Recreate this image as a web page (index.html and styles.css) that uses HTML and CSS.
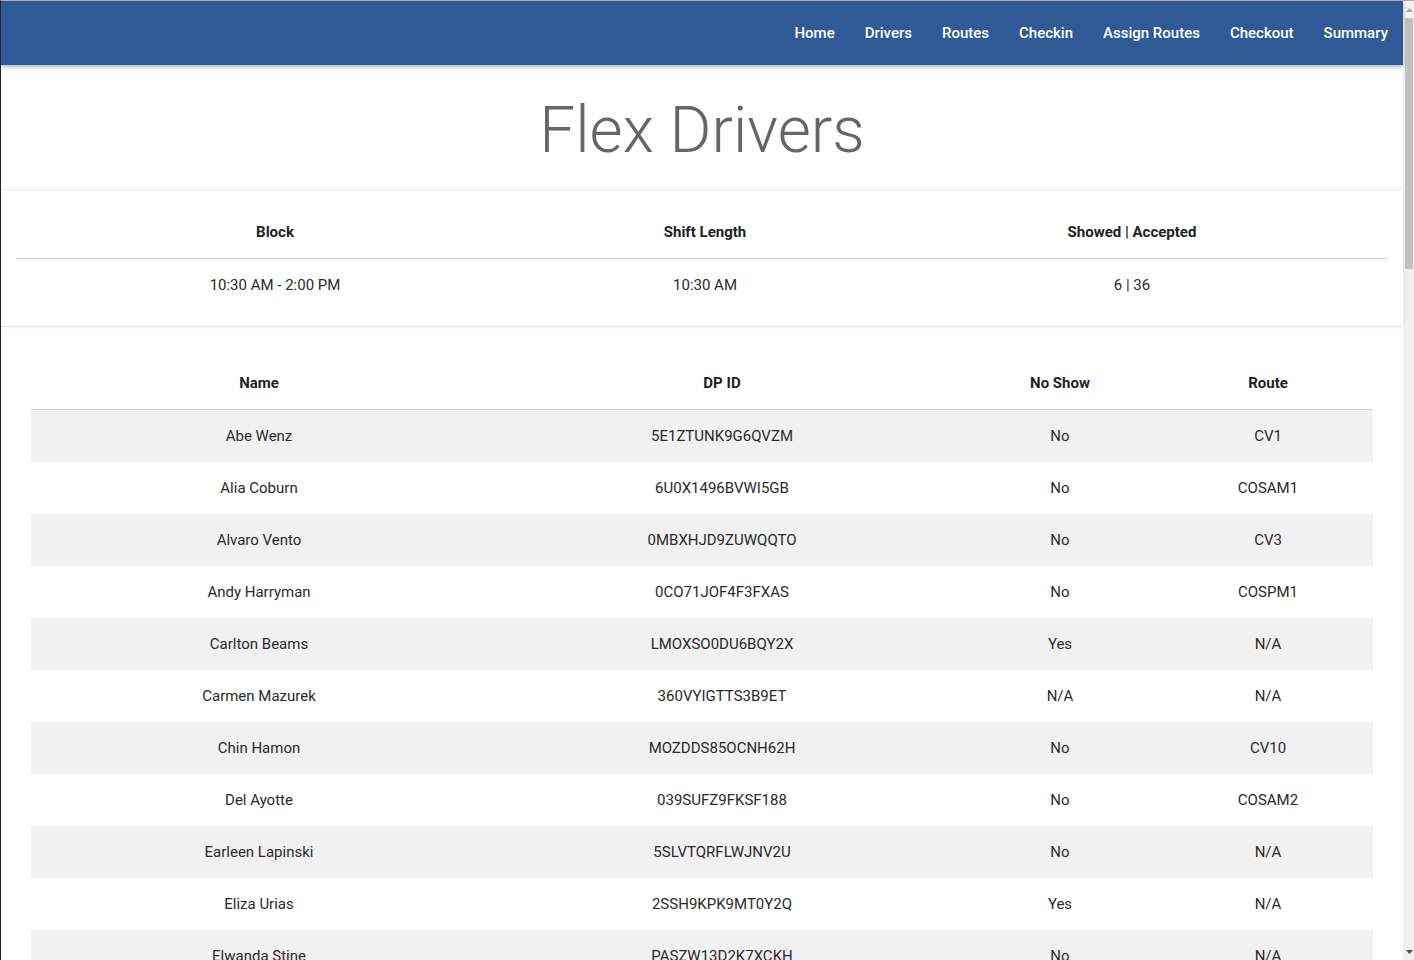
FILE: index.html
```html
<!DOCTYPE html>
<html lang="en">
<head>
<meta charset="utf-8">
<title>Flex Drivers</title>
<link rel="stylesheet" href="styles.css">
</head>
<body>
<div class="page">
<header class="navbar">
  <nav class="nav">
    <a class="nav-link" href="#">Home</a>
    <a class="nav-link" href="#">Drivers</a>
    <a class="nav-link" href="#">Routes</a>
    <a class="nav-link" href="#">Checkin</a>
    <a class="nav-link" href="#">Assign Routes</a>
    <a class="nav-link" href="#">Checkout</a>
    <a class="nav-link" href="#">Summary</a>
  </nav>
</header>

<section class="title-section">
  <h1 class="page-title">Flex Drivers</h1>
</section>

<section class="summary-card">
  <table class="summary-table">
    <colgroup><col class="c-block"><col class="c-shift"><col class="c-showed"></colgroup>
    <thead>
      <tr><th>Block</th><th>Shift Length</th><th>Showed | Accepted</th></tr>
    </thead>
    <tbody>
      <tr><td>10:30 AM - 2:00 PM</td><td>10:30 AM</td><td>6 | 36</td></tr>
    </tbody>
  </table>
</section>

<section class="drivers">
  <table class="drivers-table">
    <colgroup><col class="c-name"><col class="c-id"><col class="c-noshow"><col class="c-route"></colgroup>
    <thead>
      <tr><th>Name</th><th>DP ID</th><th>No Show</th><th>Route</th></tr>
    </thead>
    <tbody>
      <tr><td>Abe Wenz</td><td>5E1ZTUNK9G6QVZM</td><td>No</td><td>CV1</td></tr>
      <tr><td>Alia Coburn</td><td>6U0X1496BVWI5GB</td><td>No</td><td>COSAM1</td></tr>
      <tr><td>Alvaro Vento</td><td>0MBXHJD9ZUWQQTO</td><td>No</td><td>CV3</td></tr>
      <tr><td>Andy Harryman</td><td>0CO71JOF4F3FXAS</td><td>No</td><td>COSPM1</td></tr>
      <tr><td>Carlton Beams</td><td>LMOXSO0DU6BQY2X</td><td>Yes</td><td>N/A</td></tr>
      <tr><td>Carmen Mazurek</td><td>360VYIGTTS3B9ET</td><td>N/A</td><td>N/A</td></tr>
      <tr><td>Chin Hamon</td><td>MOZDDS85OCNH62H</td><td>No</td><td>CV10</td></tr>
      <tr><td>Del Ayotte</td><td>039SUFZ9FKSF188</td><td>No</td><td>COSAM2</td></tr>
      <tr><td>Earleen Lapinski</td><td>5SLVTQRFLWJNV2U</td><td>No</td><td>N/A</td></tr>
      <tr><td>Eliza Urias</td><td>2SSH9KPK9MT0Y2Q</td><td>Yes</td><td>N/A</td></tr>
      <tr><td>Elwanda Stine</td><td>PASZW13D2K7XCKH</td><td>No</td><td>N/A</td></tr>
    </tbody>
  </table>
</section>
</div>

<aside class="scrollbar" aria-hidden="true">
  <div class="sb-button">
    <svg class="sb-arrow" width="7" height="4" viewBox="0 0 7 4"><polygon points="3.5,0 7,4 0,4" fill="#a3a3a3"/></svg>
  </div>
  <div class="sb-track">
    <div class="sb-thumb"></div>
  </div>
  <div class="sb-button">
    <svg class="sb-arrow" width="7" height="4" viewBox="0 0 7 4"><polygon points="0,0 7,0 3.5,4" fill="#505050"/></svg>
  </div>
</aside>
</body>
</html>
```

FILE: styles.css
```css
html {
  background: #ffffff;
  overflow: hidden;
}

body {
  margin: 0;
  height: 959px;
  overflow: hidden;
  display: flex;
  border-top: 1px solid #adadad;
  border-left: 1px solid #1c2735;
  font-family: Roboto, "Liberation Sans", Arial, sans-serif;
  font-size: 15px;
  color: #222222;
  background: #ffffff;
}

.page {
  flex: 1;
  min-width: 0;
}

/* ---------- fake browser scrollbar ---------- */
.scrollbar {
  flex: none;
  width: 11px;
  height: 959px;
  display: flex;
  flex-direction: column;
  background: #f1f1f1;
}

.sb-button {
  flex: none;
  height: 17px;
  display: flex;
  align-items: center;
  justify-content: center;
  padding-left: 1px;
}

.sb-arrow {
  display: block;
}

.sb-track {
  flex: 1;
  padding: 0 1px 0 2px;
}

.sb-thumb {
  height: 251px;
  background: #c1c1c1;
}

/* ---------- navbar ---------- */
.navbar {
  position: relative;
  z-index: 2;
  height: 64px;
  background: #305a96;
  box-shadow: 0 2px 4px rgba(0, 0, 0, 0.3);
  display: flex;
  justify-content: flex-end;
  align-items: center;
}

.nav {
  display: flex;
  align-items: center;
}

.nav-link {
  display: block;
  padding: 0 15px;
  line-height: 64px;
  color: #ffffff;
  text-decoration: none;
  font-size: 15px;
  font-weight: 500;
}

/* ---------- title ---------- */
.title-section {
  padding: 27px 0 22px;
  text-align: center;
  background: #ffffff;
}

.page-title {
  margin: 0;
  font-size: 64px;
  line-height: 77px;
  font-weight: 300;
  color: #666666;
}

/* ---------- summary ---------- */
.summary-card {
  position: relative;
  z-index: 1;
  padding: 15px;
  background: #ffffff;
  border-bottom: 1px solid #dddddd;
  box-shadow: 0 -2px 6px rgba(0, 0, 0, 0.07);
}

.summary-table,
.drivers-table {
  width: 100%;
  border-collapse: collapse;
  table-layout: fixed;
}

.c-block { width: 518px; }
.c-shift { width: 342px; }
.c-showed { width: 512px; }

.c-name { width: 456px; }
.c-id { width: 470px; }
.c-noshow { width: 206px; }
.c-route { width: 210px; }

th,
td {
  height: 52px;
  padding: 0 8px;
  text-align: center;
  vertical-align: middle;
  font-size: 15px;
}

th {
  font-weight: 700;
  color: #222222;
  border-bottom: 1px solid #d0d0d0;
}

td {
  font-weight: 400;
  color: #2a2a2a;
}

/* ---------- drivers ---------- */
.drivers {
  padding: 30px 30px 30px;
}

.drivers-table tbody tr:nth-child(odd) td {
  background: #f1f1f1;
}
```
